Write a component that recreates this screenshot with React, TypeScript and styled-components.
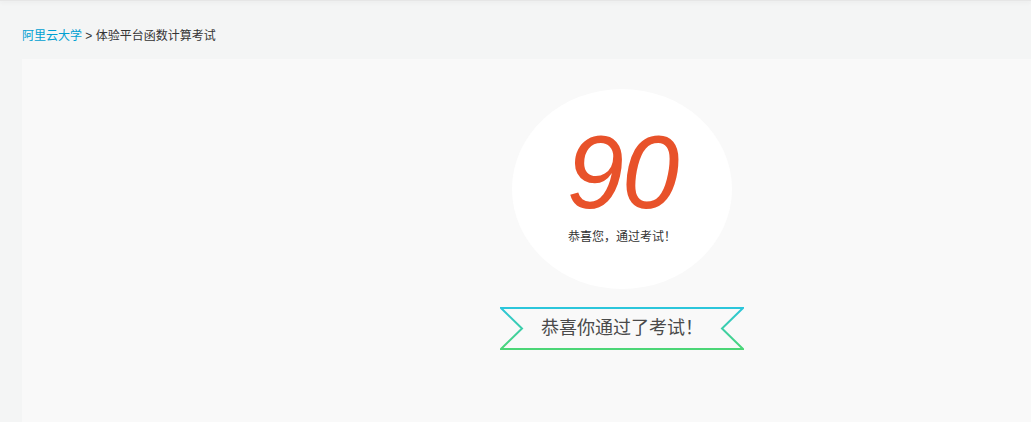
import React from 'react'
import styled, { createGlobalStyle } from 'styled-components'

const GlobalStyle = createGlobalStyle`
  html, body {
    margin: 0;
    padding: 0;
    background: #f4f5f5;
    font-family: "Liberation Sans", "Noto Sans CJK SC", sans-serif;
    overflow: hidden;
  }
`

const TopBar = styled.div`
  height: 1px;
  background: #e6e6e6;
  box-shadow: 0 1px 4px rgba(0, 0, 0, 0.12);
`

const Page = styled.div`
  padding: 0 22px;
`

const Crumbs = styled.div`
  height: 58px;
  display: flex;
  align-items: center;
  font-size: 12px;
  color: #333;
  padding-top: 9px;
  box-sizing: border-box;
  a {
    color: #00a0d2;
    text-decoration: none;
  }
`

const Card = styled.div`
  width: 1200px;
  min-height: 380px;
  background: #f9f9f9;
  padding-top: 30px;
  display: flex;
  flex-direction: column;
  align-items: center;
`

const Score = styled.div`
  width: 220px;
  height: 200px;
  border-radius: 50%;
  background: #fff;
  display: flex;
  flex-direction: column;
  align-items: center;
  padding-top: 34px;
  box-sizing: border-box;
`

const Number = styled.div`
  font-family: "Liberation Sans", Arial, sans-serif;
  font-style: italic;
  font-size: 103px;
  line-height: 100px;
  color: #e8522a;
  letter-spacing: -2px;
`

const Hint = styled.div`
  font-size: 12px;
  color: #333;
  margin-top: 4px;
`

const Ribbon = styled.div`
  position: relative;
  width: 244px;
  height: 43px;
  margin-top: 18px;
  display: flex;
  align-items: center;
  justify-content: center;
  font-size: 18px;
  color: #4a4a4a;
  padding-bottom: 5px;
  box-sizing: border-box;
  svg {
    position: absolute;
    inset: 0;
  }
  span {
    position: relative;
  }
`

export default function App() {
  return (
    <>
      <GlobalStyle />
      <TopBar />
      <Page>
        <Crumbs>
          <a href="#">阿里云大学</a>&nbsp;&gt; 体验平台函数计算考试
        </Crumbs>
        <Card>
          <Score>
            <Number>90</Number>
            <Hint>恭喜您，通过考试！</Hint>
          </Score>
          <Ribbon>
            <svg width="244" height="43" viewBox="0 0 244 43">
              <defs>
                <linearGradient id="rib" x1="0" y1="0" x2="0" y2="1">
                  <stop offset="0" stopColor="#2cc6dc" />
                  <stop offset="1" stopColor="#4cd676" />
                </linearGradient>
              </defs>
              <polygon
                points="1,1 243,1 222,21.5 243,42 1,42 22,21.5"
                fill="none"
                stroke="url(#rib)"
                strokeWidth="2"
              />
            </svg>
            <span>恭喜你通过了考试！</span>
          </Ribbon>
        </Card>
      </Page>
    </>
  )
}
